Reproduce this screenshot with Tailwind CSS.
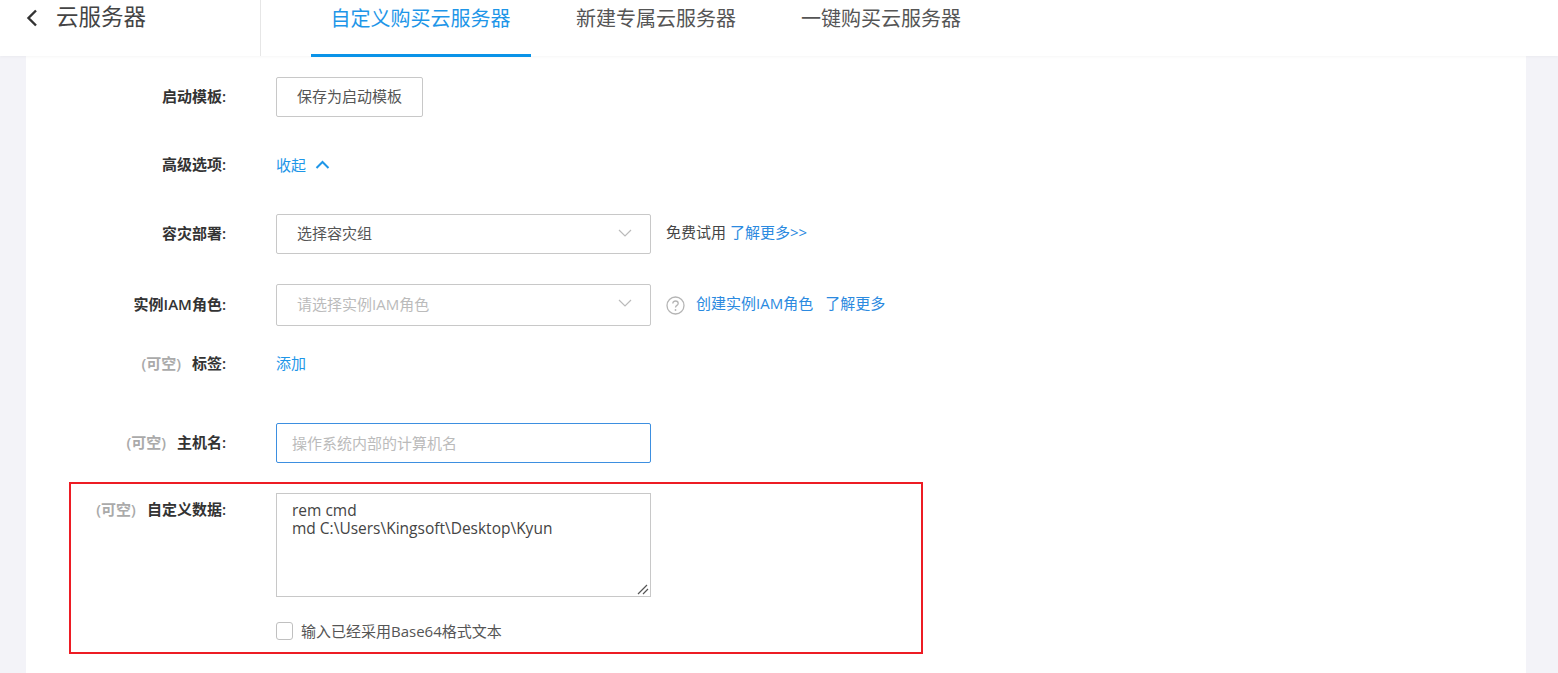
<!DOCTYPE html>
<html lang="zh-CN">
<head>
    <meta charset="UTF-8">
    <meta name="viewport" content="width=device-width, initial-scale=1.0">
    <script src="https://cdn.jsdelivr.net/npm/@tailwindcss/browser@4"></script>
    <title>云服务器</title>
</head>
<body class="bg-[#f3f3f8] font-['Open_Sans','Noto_Sans_CJK_SC',sans-serif] text-[15px] text-[#333] h-[673px] overflow-hidden">
    <!-- 顶部导航 -->
    <header class="relative z-10 h-14 bg-white flex shadow-[0_1px_3px_rgba(0,0,0,0.04)]">
        <div class="w-[261px] h-14 border-r border-[#e6e6e6] flex items-start pt-[3px] pl-[25px]">
            <svg class="w-[14px] h-[18px] mt-[6px]" viewBox="0 0 14 18" fill="none" stroke="#333" stroke-width="2.4"><path d="M11 1.5 L3.5 9 L11 16.5"/></svg>
            <span class="ml-[17px] text-[22.5px] leading-[28px] text-[#444]">云服务器</span>
        </div>
        <nav class="flex pl-[50px] text-xl">
            <a class="w-[220px] h-[57px] border-b-[3px] border-[#0a93e8] text-[#1e96e8] text-center pt-[5px] pr-[1px] leading-[28px]">自定义购买云服务器</a>
            <a class="ml-[45px] pt-[5px] leading-[28px] text-[#555]">新建专属云服务器</a>
            <a class="ml-[65px] pt-[5px] leading-[28px] text-[#555]">一键购买云服务器</a>
        </nav>
    </header>

    <main class="relative mx-[26px] w-[1500px] h-[617px] bg-white pt-[21px]">
        <!-- 启动模板 -->
        <div class="flex items-center h-10">
            <label class="w-[200px] text-right font-semibold -mt-[2px]">启动模板:</label>
            <button class="ml-[50px] w-[147px] h-10 pb-[2px] border border-[#c8c8c8] rounded-[2px] text-[#555]">保存为启动模板</button>
        </div>

        <!-- 高级选项 -->
        <div class="flex items-center h-5 mt-[38px]">
            <label class="w-[200px] text-right font-semibold -mt-[1px]">高级选项:</label>
            <a class="ml-[50px] text-[#1e96e8]">收起</a>
            <svg class="ml-[9px] w-[15px] h-[10px]" viewBox="0 0 15 10" fill="none" stroke="#1e96e8" stroke-width="2"><path d="M1.5 8 L7.5 2 L13.5 8"/></svg>
        </div>

        <!-- 容灾部署 -->
        <div class="flex items-center h-10 mt-[39px]">
            <label class="w-[200px] text-right font-semibold -mt-[1px]">容灾部署:</label>
            <div class="ml-[50px] w-[375px] h-10 pb-[2px] border border-[#c8c8c8] rounded-[2px] flex items-center justify-between pl-[20px] pr-[18px] text-[#555]">
                <span>选择容灾组</span>
                <svg class="w-[14px] h-[8px]" viewBox="0 0 14 8" fill="none" stroke="#bbb" stroke-width="1.2"><path d="M1 1 L7 7 L13 1"/></svg>
            </div>
            <span class="ml-[15px] -mt-[4px] text-[#444]">免费试用</span>
            <a class="ml-[4px] -mt-[4px] text-[#2b8ae0]">了解更多&gt;&gt;</a>
        </div>

        <!-- 实例IAM角色 -->
        <div class="flex items-center h-[42px] mt-[30px]">
            <label class="w-[200px] text-right font-semibold -mt-[1px]">实例IAM角色:</label>
            <div class="ml-[50px] w-[375px] h-[42px] pb-[2px] border border-[#c8c8c8] rounded-[2px] flex items-center justify-between pl-[20px] pr-[18px] text-[#bbb]">
                <span>请选择实例IAM角色</span>
                <svg class="w-[14px] h-[8px] -mt-[2px]" viewBox="0 0 14 8" fill="none" stroke="#bbb" stroke-width="1.2"><path d="M1 1 L7 7 L13 1"/></svg>
            </div>
            <svg class="ml-[15px] w-[19px] h-[19px]" viewBox="0 0 19 19" fill="none">
                <circle cx="9.5" cy="9.5" r="8.5" stroke="#b5b5b5" stroke-width="1.3"/>
                <path d="M6.8 7.4 C6.8 4.2 12.2 4.2 12.2 7.4 C12.2 9.4 9.5 9.4 9.5 11.6" stroke="#b5b5b5" stroke-width="1.3"/>
                <circle cx="9.5" cy="14" r="0.9" fill="#b5b5b5"/>
            </svg>
            <a class="ml-[11px] -mt-[3px] text-[#2b8ae0]">创建实例IAM角色</a>
            <a class="ml-[12px] -mt-[3px] text-[#2b8ae0]">了解更多</a>
        </div>

        <!-- 标签 -->
        <div class="flex items-center h-5 mt-[28px]">
            <label class="w-[200px] text-right font-semibold -mt-[2px]"><span class="text-[#aaa] mr-[11px]">(可空)</span>标签:</label>
            <a class="ml-[50px] text-[#1e96e8] -mt-[2px]">添加</a>
        </div>

        <!-- 主机名 -->
        <div class="flex items-center h-10 mt-[49px]">
            <label class="w-[200px] text-right font-semibold -mt-[1px]"><span class="text-[#aaa] mr-[11px]">(可空)</span>主机名:</label>
            <input class="ml-[50px] w-[375px] h-10 border border-[#3d8fe0] rounded-[2px] pl-[15px] outline-none placeholder:text-[#bbb]" placeholder="操作系统内部的计算机名">
        </div>

        <!-- 自定义数据 -->
        <div class="flex items-start mt-[30px]">
            <label class="w-[200px] text-right font-semibold pt-[5px]"><span class="text-[#aaa] mr-[11px]">(可空)</span>自定义数据:</label>
            <div class="ml-[50px]">
                <div class="relative w-[375px] h-[104px]">
                    <textarea class="block w-full h-full resize-none border border-[#c8c8c8] pl-[15px] pt-[7px] text-[15.5px] leading-[18px] text-[#444] outline-none">rem cmd
md C:\Users\Kingsoft\Desktop\Kyun</textarea>
                    <svg class="absolute right-[2px] bottom-[2px] w-[12px] h-[12px]" viewBox="0 0 12 12" fill="none" stroke="#555" stroke-width="1.2"><path d="M1 11 L10 2 M6 11 L11 6"/></svg>
                </div>
                <div class="flex items-center mt-[23px]">
                    <span class="w-[17px] h-[18px] border border-[#c0c0c0] rounded-[3px]"></span>
                    <span class="ml-[8px] text-[#555]">输入已经采用Base64格式文本</span>
                </div>
            </div>
        </div>

        <!-- 红框标注 -->
        <div class="absolute left-[43px] top-[426px] w-[854px] h-[172px] border-2 border-[#ed1c24]"></div>
    </main>
</body>
</html>
